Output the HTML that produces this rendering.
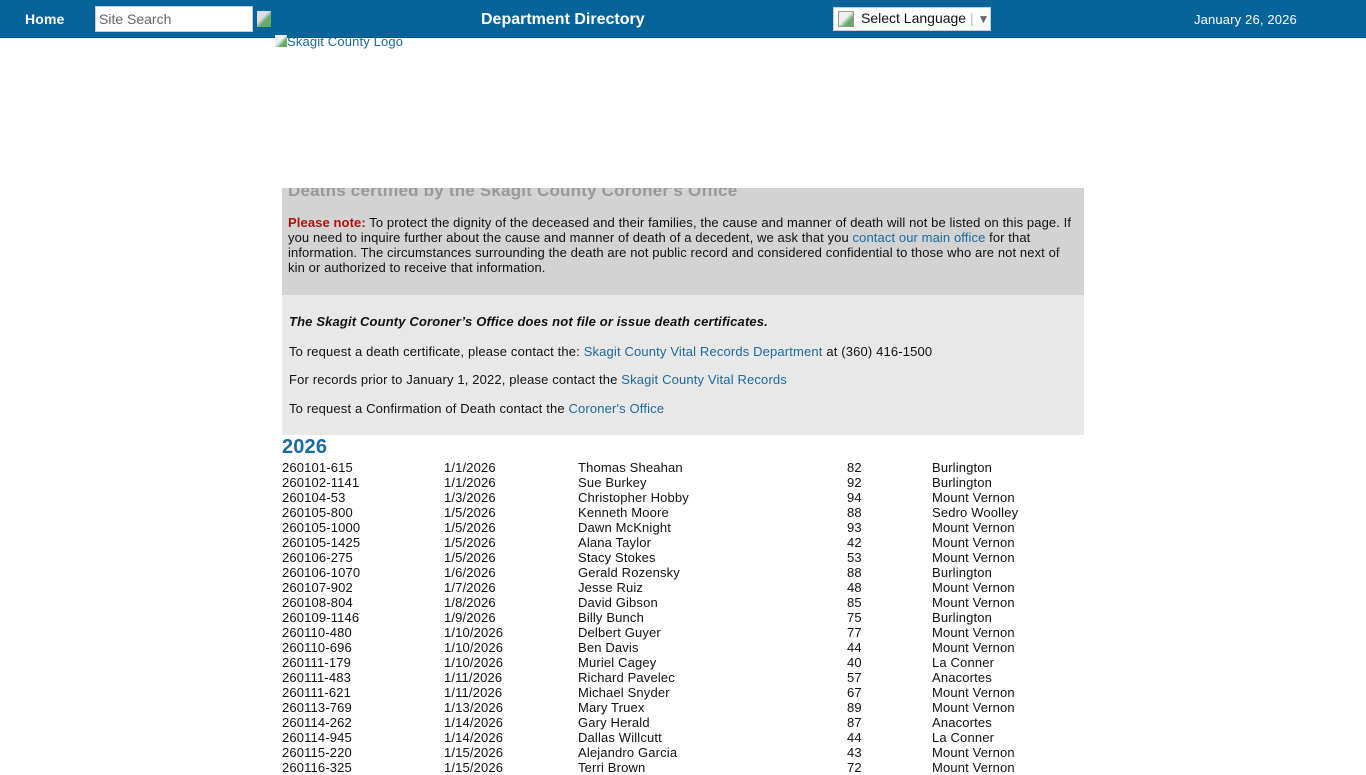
<!DOCTYPE html>
<html><head><meta charset="utf-8"><style>
*{margin:0;padding:0;box-sizing:border-box}
body{width:1366px;height:768px;overflow:hidden;background:#fff;font-family:"Liberation Sans",Arial,sans-serif;font-size:13px;color:#111;position:relative;letter-spacing:0.15px}
.hdr{position:absolute;left:0;top:0;width:1366px;height:38px;background:#07649b;border-bottom:1px solid #055683}
.a{position:absolute;white-space:nowrap}
a{color:#1a6a9e;text-decoration:none}
.box{position:absolute;left:282px;width:802px}
.t div{position:absolute;white-space:nowrap}
</style></head><body>
<div class="hdr">
<div class="a" style="left:25px;top:11px;color:#fff;font-weight:bold;font-size:14px">Home</div>
<div class="a" style="left:95px;top:6px;width:158px;height:26px;background:#fff;border:1px solid #ccc;color:#666;font-size:14px;padding:4px 3px;letter-spacing:0">Site Search</div>
<div class="a" style="left:257px;top:11px;width:14px;height:16px;background:linear-gradient(135deg,#dde 40%,#6a6 60%);"></div>
<div class="a" style="left:481px;top:11px;color:#fff;font-weight:bold;font-size:16px;letter-spacing:0">Department Directory</div>
<div class="a" style="left:833px;top:7px;width:158px;height:24px;background:#fff;border:1px solid #ccc;font-size:14px;padding:2px 0 0 27px;color:#111;letter-spacing:0">Select Language <span style="color:#bbb">|</span> <span style="color:#666;font-size:12px">▼</span></div>
<div class="a" style="left:838px;top:11px;width:16px;height:16px;background:linear-gradient(135deg,#eee 45%,#6a6 70%);border:1px solid #999"></div>
<div class="a" style="left:1194px;top:12px;color:#fff;font-size:13px">January 26, 2026</div>
</div>
<div class="a" style="left:275px;top:34px;color:#1a6a9e;font-size:13px"><span style="display:inline-block;width:12px;height:12px;background:linear-gradient(135deg,#eee 45%,#6a6 70%);vertical-align:-1px"></span>Skagit County Logo</div>
<div class="box" style="top:188px;height:107px;background:#d3d3d3;overflow:hidden">
<div class="a" style="left:6px;top:-7px;color:#999;font-weight:bold;font-size:17px;letter-spacing:0.2px">Deaths certified by the Skagit County Coroner's Office</div>
<div class="a" style="left:6px;top:27px;width:792px;line-height:15px;white-space:normal;letter-spacing:0.1px"><b style="color:#b01010">Please note:</b> To protect the dignity of the deceased and their families, the cause and manner of death will not be listed on this page. If you need to inquire further about the cause and manner of death of a decedent, we ask that you <a>contact our main office</a> for that information. The circumstances surrounding the death are not public record and considered confidential to those who are not next of kin or authorized to receive that information.</div>
</div>
<div class="box" style="top:295px;height:140px;background:#e8e8e8">
<div class="a" style="left:7px;top:19px;font-weight:bold;font-style:italic">The Skagit County Coroner’s Office does not file or issue death certificates.</div>
<div class="a" style="left:7px;top:49px">To request a death certificate, please contact the: <a>Skagit County Vital Records Department</a> at (360) 416-1500</div>
<div class="a" style="left:7px;top:77px">For records prior to January 1, 2022, please contact the <a>Skagit County Vital Records</a></div>
<div class="a" style="left:7px;top:106px">To request a Confirmation of Death contact the <a>Coroner's Office</a></div>
</div>
<div class="a" style="left:282px;top:436px;font-size:20px;font-weight:bold;color:#1a6a9e">2026</div>
<div class="t" id="t"></div>
<script>
var r=[["260101-615","1/1/2026","Thomas Sheahan","82","Burlington"],["260102-1141","1/1/2026","Sue Burkey","92","Burlington"],["260104-53","1/3/2026","Christopher Hobby","94","Mount Vernon"],["260105-800","1/5/2026","Kenneth Moore","88","Sedro Woolley"],["260105-1000","1/5/2026","Dawn McKnight","93","Mount Vernon"],["260105-1425","1/5/2026","Alana Taylor","42","Mount Vernon"],["260106-275","1/5/2026","Stacy Stokes","53","Mount Vernon"],["260106-1070","1/6/2026","Gerald Rozensky","88","Burlington"],["260107-902","1/7/2026","Jesse Ruiz","48","Mount Vernon"],["260108-804","1/8/2026","David Gibson","85","Mount Vernon"],["260109-1146","1/9/2026","Billy Bunch","75","Burlington"],["260110-480","1/10/2026","Delbert Guyer","77","Mount Vernon"],["260110-696","1/10/2026","Ben Davis","44","Mount Vernon"],["260111-179","1/10/2026","Muriel Cagey","40","La Conner"],["260111-483","1/11/2026","Richard Pavelec","57","Anacortes"],["260111-621","1/11/2026","Michael Snyder","67","Mount Vernon"],["260113-769","1/13/2026","Mary Truex","89","Mount Vernon"],["260114-262","1/14/2026","Gary Herald","87","Anacortes"],["260114-945","1/14/2026","Dallas Willcutt","44","La Conner"],["260115-220","1/15/2026","Alejandro Garcia","43","Mount Vernon"],["260116-325","1/15/2026","Terri Brown","72","Mount Vernon"]];
var x=[282,444,578,847,932],h="";
r.forEach(function(a,i){a.forEach(function(c,j){h+='<div style="left:'+x[j]+'px;top:'+(460+i*15)+'px">'+c+'</div>'})});
document.getElementById('t').innerHTML=h;
</script>
</body></html>
